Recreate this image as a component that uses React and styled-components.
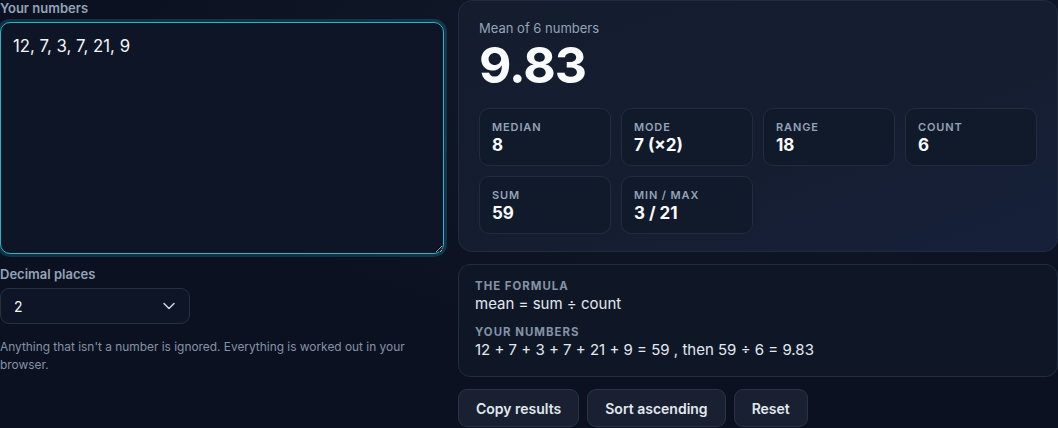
import React, { useState } from 'react';
import styled, { createGlobalStyle } from 'styled-components';
import { ChevronDown } from 'lucide-react';

const GlobalStyle = createGlobalStyle`
    html, body {
        margin:0;
        padding:0;
        background:#0b1120;
    }
    body {
        font-family:Inter, "Noto Sans", sans-serif;
        color:#e2e8f0;
        background:radial-gradient(ellipse at 70% 10%, #121a2c 0%, #0b1120 60%);
        min-height:428px;
        overflow:hidden;
    }
    * { box-sizing:border-box; }
`

const numbers = [12, 7, 3, 7, 21, 9];

const stats = [
    { label: 'Median', value: '8' },
    { label: 'Mode', value: '7 (×2)' },
    { label: 'Range', value: '18' },
    { label: 'Count', value: '6' },
    { label: 'Sum', value: '59' },
    { label: 'Min / Max', value: '3 / 21' },
];

function App() {
    const [text, setText] = useState(numbers.join(', '));
    const [places, setPlaces] = useState('2');
    return (
        <>
            <GlobalStyle />
            <Layout>
                <InputColumn>
                    <FieldLabel htmlFor="nums">Your numbers</FieldLabel>
                    <NumbersArea id="nums" value={text} onChange={e => setText(e.target.value)} />
                    <FieldLabel htmlFor="places" $top={12}>Decimal places</FieldLabel>
                    <SelectWrap>
                        <Select id="places" value={places} onChange={e => setPlaces(e.target.value)}>
                            <option value="0">0</option>
                            <option value="1">1</option>
                            <option value="2">2</option>
                            <option value="3">3</option>
                            <option value="4">4</option>
                        </Select>
                        <Chevron><ChevronDown size={20} strokeWidth={1.8} /></Chevron>
                    </SelectWrap>
                    <Help>Anything that isn't a number is ignored. Everything is worked out in your browser.</Help>
                </InputColumn>

                <ResultColumn>
                    <MeanPanel>
                        <MeanLabel>Mean of 6 numbers</MeanLabel>
                        <MeanValue>9.83</MeanValue>
                        <StatGrid>
                            {stats.map(s => (
                                <StatCard key={s.label}>
                                    <StatLabel>{s.label}</StatLabel>
                                    <StatValue>{s.value}</StatValue>
                                </StatCard>
                            ))}
                        </StatGrid>
                    </MeanPanel>

                    <FormulaPanel>
                        <SmallCaps>The formula</SmallCaps>
                        <FormulaLine>mean = sum ÷ count</FormulaLine>
                        <SmallCaps $top={10}>Your numbers</SmallCaps>
                        <FormulaLine>12 + 7 + 3 + 7 + 21 + 9 = 59 , then 59 ÷ 6 = 9.83</FormulaLine>
                    </FormulaPanel>

                    <Actions>
                        <Button>Copy results</Button>
                        <Button>Sort ascending</Button>
                        <Button>Reset</Button>
                    </Actions>
                </ResultColumn>
            </Layout>
        </>
    )
}

export default App;

const Layout = styled.div`
    width:1058px;
    display:grid;
    grid-template-columns:444px 1fr;
    gap:14px;
    align-items:start;
`

const InputColumn = styled.div`
    display:flex;
    flex-direction:column;
`

const FieldLabel = styled.label`
    font-size:13px;
    line-height:16px;
    font-weight:600;
    color:#94a3b8;
    margin-top:${props => props.$top || 0}px;
    margin-bottom:6px;
`

const NumbersArea = styled.textarea`
    width:100%;
    height:232px;
    padding:11px 12px;
    font-family:Inter, "Noto Sans", sans-serif;
    font-size:16.8px;
    line-height:24px;
    color:#f1f5f9;
    background:#0e1527;
    border:1px solid #27b4c9;
    border-radius:10px;
    box-shadow:0 0 0 3px rgba(34,211,238,0.18);
    outline:none;
    resize:vertical;
`

const SelectWrap = styled.div`
    position:relative;
    width:190px;
`

const Select = styled.select`
    width:100%;
    height:36px;
    padding:0 13px;
    appearance:none;
    font-family:Inter, "Noto Sans", sans-serif;
    font-size:14px;
    color:#f1f5f9;
    background:#0e1527;
    border:1px solid #263043;
    border-radius:9px;
    outline:none;
`

const Chevron = styled.span`
    position:absolute;
    right:11px;
    top:8px;
    display:flex;
    color:#cbd5e1;
    pointer-events:none;
`

const Help = styled.p`
    margin:14px 0 0;
    font-size:11.9px;
    line-height:18px;
    color:#8592a6;
`

const ResultColumn = styled.div`
    display:flex;
    flex-direction:column;
    gap:12px;
`

const MeanPanel = styled.section`
    padding:19px 20px 17px;
    border:1px solid #222c3e;
    border-radius:14px;
    background:linear-gradient(160deg, #141c2e 0%, #151e31 60%, #16203a 100%);
`

const MeanLabel = styled.div`
    font-size:13px;
    line-height:16px;
    color:#94a3b8;
`

const MeanValue = styled.div`
    margin-top:2px;
    font-size:50px;
    line-height:55px;
    font-weight:700;
    letter-spacing:-0.02em;
    color:#f8fafc;
`

const StatGrid = styled.div`
    margin-top:15px;
    display:grid;
    grid-template-columns:repeat(4, 1fr);
    gap:10px;
`

const StatCard = styled.div`
    padding:11px 12px 9px;
    border:1px solid #222c3d;
    border-radius:10px;
    background:#111a2b;
    display:flex;
    flex-direction:column;
`

const StatLabel = styled.div`
    font-size:11px;
    line-height:14px;
    font-weight:600;
    letter-spacing:0.08em;
    text-transform:uppercase;
    color:#94a3b8;
`

const StatValue = styled.div`
    font-size:17px;
    line-height:22px;
    font-weight:700;
    color:#f8fafc;
`

const FormulaPanel = styled.section`
    padding:14px 16px 15px;
    border:1px solid #222c3e;
    border-radius:12px;
    background:#0f1727;
    display:flex;
    flex-direction:column;
`

const SmallCaps = styled.div`
    margin-top:${props => props.$top || 0}px;
    font-size:11.4px;
    line-height:14px;
    font-weight:700;
    letter-spacing:0.09em;
    text-transform:uppercase;
    color:#8592a6;
`

const FormulaLine = styled.div`
    font-size:15px;
    line-height:22px;
    color:#e2e8f0;
`

const Actions = styled.div`
    display:flex;
    gap:8px;
`

const Button = styled.button`
    height:38px;
    padding:0 17px;
    font-family:Inter, "Noto Sans", sans-serif;
    font-size:14px;
    font-weight:600;
    color:#e2e8f0;
    background:#182031;
    border:1px solid #2a3446;
    border-radius:9px;
    cursor:pointer;
`
